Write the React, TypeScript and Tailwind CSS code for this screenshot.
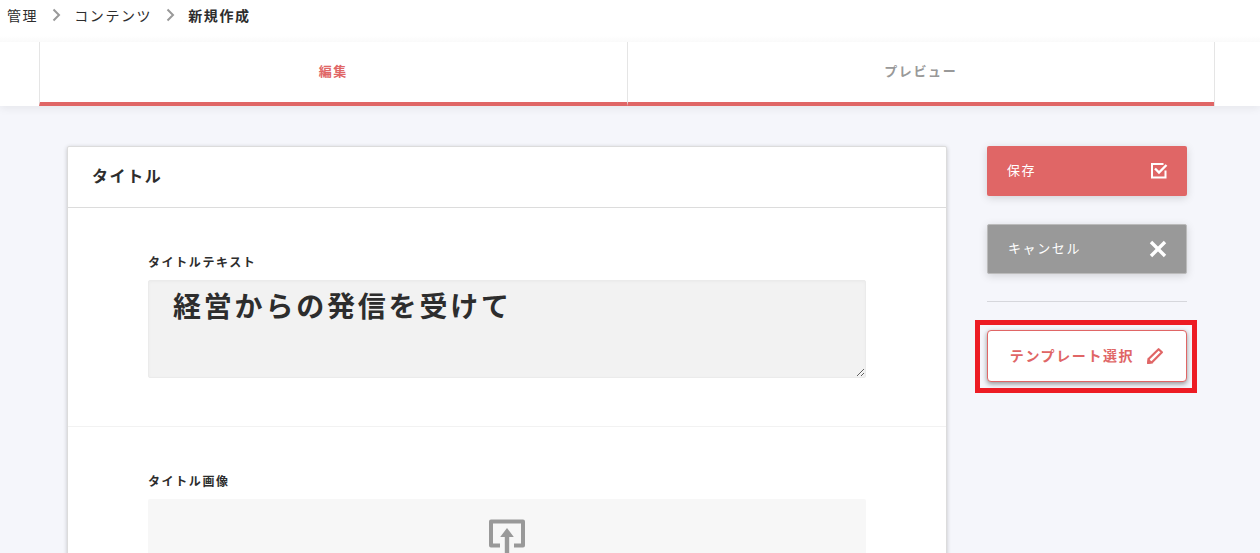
import React from "react";

function Chevron() {
  return (
    <svg width="12" height="14" viewBox="0 0 12 14" fill="none" stroke="#999" strokeWidth="2" aria-hidden="true">
      <path d="M3.5 1.5 L9 7 L3.5 12.5" />
    </svg>
  );
}

function CheckIcon() {
  return (
    <svg width="18" height="18" viewBox="0 0 18 18" fill="none" stroke="#fff" strokeWidth="2" aria-hidden="true">
      <path d="M13.5 2 H2 V15.5 H15.5 V8.5" />
      <path d="M5 6.5 L9 10.5 L16.5 3" strokeWidth="2.4" />
    </svg>
  );
}

function CloseIcon() {
  return (
    <svg width="18" height="18" viewBox="0 0 18 18" fill="none" stroke="#fff" strokeWidth="3.4" aria-hidden="true">
      <path d="M2 2 L16 16 M16 2 L2 16" />
    </svg>
  );
}

function PencilIcon() {
  return (
    <svg width="18" height="18" viewBox="0 0 18 18" fill="none" stroke="#e06666" strokeWidth="2.2" strokeLinejoin="round" aria-hidden="true">
      <path d="M2.8 11.8 L12.6 2.2 L15.9 5.3 L6 15.2 L2.2 15.8 Z" />
      <path d="M1 17 L1.8 10.8 L7.2 16.2 Z" fill="#e06666" stroke="none" />
    </svg>
  );
}

function UploadIcon() {
  return (
    <svg width="36" height="40" viewBox="0 0 36 40" aria-hidden="true">
      <path d="M11 26.5 H2 V2.5 H34 V26.5 H25" fill="none" stroke="#999" strokeWidth="4" strokeLinejoin="round" />
      <path d="M18 9 L24.8 18 H20.2 V40 H15.8 V18 H11.2 Z" fill="#999" />
    </svg>
  );
}

const tabs = [
  { label: "編集", color: "text-[#e06666]", selected: true },
  { label: "プレビュー", color: "text-[#999]", selected: false },
];

export default function App() {
  return (
    <div className="flex h-screen flex-col overflow-hidden bg-[#f5f6fb] font-['Noto_Sans_CJK_JP',sans-serif] tracking-widest text-[#2d2d2d]">
      <nav aria-label="breadcrumb" className="relative z-10 flex h-[42px] shrink-0 items-start bg-linear-to-b from-white from-85% to-[#fafafa] px-[7px] pt-[5px] text-sm leading-5">
        <ol className="flex items-center gap-3">
          <li className="flex items-center gap-3">
            <a href="#admin">管理</a>
            <Chevron />
          </li>
          <li className="flex items-center gap-3">
            <a href="#contents">コンテンツ</a>
            <Chevron />
          </li>
          <li className="font-bold" aria-current="page">新規作成</li>
        </ol>
      </nav>

      <div className="relative shrink-0 bg-white pr-1.5 shadow-[0_3px_8px_rgba(0,0,0,0.06)]">
        <div role="tablist" className="mx-auto flex h-16 max-w-[1176px] border-r border-[#e5e5e5]">
          {tabs.map((tab) => (
            <button
              key={tab.label}
              type="button"
              role="tab"
              aria-selected={tab.selected}
              className={`flex-1 border-b-4 border-l border-b-[#e06666] border-l-[#e5e5e5] pb-0.5 text-[13px] font-bold ${tab.color}`}
            >
              {tab.label}
            </button>
          ))}
        </div>
      </div>

      <div className="pr-1.5">
        <div className="mx-auto flex max-w-[1120px] items-start gap-10 pt-10">
          <main className="flex-1 rounded-xs border border-[#dcdcdc] bg-white shadow-[0_1px_4px_rgba(0,0,0,0.2)]">
            <h1 className="border-b border-[#dcdcdc] px-6 pt-4 pb-5 text-base leading-6 font-bold">タイトル</h1>
            <section className="border-b border-[#f2f2f2] px-20 pt-[45px] pb-12">
              <label htmlFor="title-text" className="mb-[9px] block text-xs leading-[18px] font-bold">タイトルテキスト</label>
              <textarea
                id="title-text"
                defaultValue="経営からの発信を受けて"
                className="block h-[98px] w-full rounded-xs border border-[#ebebeb] bg-[#f2f2f2] px-6 py-1 text-[28px] leading-10 font-bold tracking-widest shadow-[inset_0_1px_3px_rgba(0,0,0,0.03)] outline-none"
              />
            </section>
            <section className="px-20 pt-[45px] pb-12">
              <label htmlFor="title-image" className="block text-xs leading-[18px] font-bold">タイトル画像</label>
              <label htmlFor="title-image" className="mt-[9px] flex h-48 cursor-pointer justify-center rounded-xs bg-[#f7f7f7] pt-5">
                <UploadIcon />
                <input id="title-image" type="file" className="sr-only" />
              </label>
            </section>
          </main>

          <aside className="w-[200px] shrink-0">
            <button type="button" className="flex h-[50px] w-full items-center justify-between rounded-xs bg-[#e06666] pr-[19px] pl-5 text-[13px] text-white shadow-[0_2px_8px_rgba(0,0,0,0.15)]">
              <span className="pb-0.5">保存</span>
              <CheckIcon />
            </button>
            <button type="button" className="mt-7 flex h-[50px] w-full items-center justify-between rounded-xs border border-[#bbb] bg-[#999] pr-[19px] pl-5 text-[13px] text-white shadow-[0_2px_8px_rgba(0,0,0,0.15)]">
              <span className="pb-0.5">キャンセル</span>
              <CloseIcon />
            </button>
            <hr className="mt-[27px] mb-7 border-[#d6d7dc]" />
            <div className="relative">
              <button type="button" className="flex h-[52px] w-full items-center justify-center gap-3 rounded-sm border border-[#e06666] bg-white text-sm font-bold text-[#e06666] shadow-[0_2px_5px_rgba(0,0,0,0.4)]">
                <span className="pb-0.5">テンプレート選択</span>
                <PencilIcon />
              </button>
              <div className="pointer-events-none absolute -top-2.5 -right-2.5 -bottom-[11px] -left-3 border-5 border-[#ed1c24]" />
            </div>
          </aside>
        </div>
      </div>
    </div>
  );
}
